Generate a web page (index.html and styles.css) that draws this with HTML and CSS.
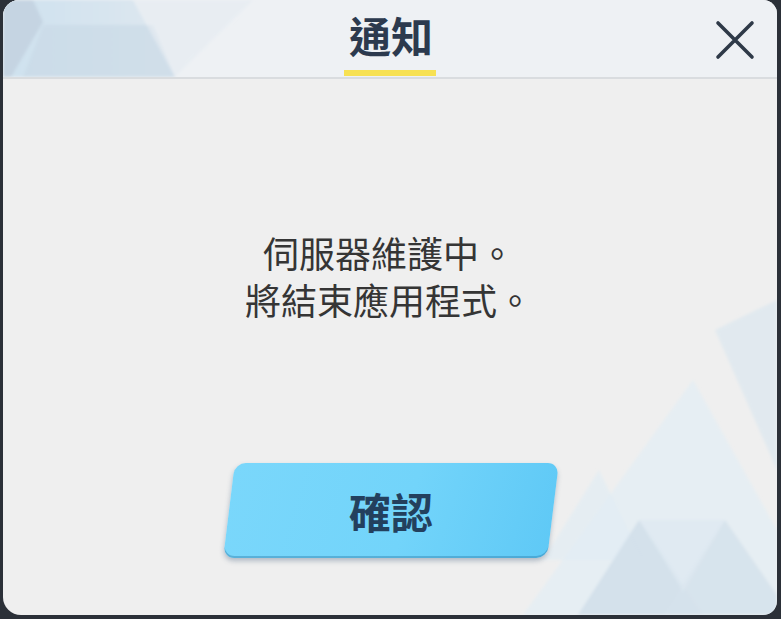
FILE: index.html
```html
<!DOCTYPE html>
<html lang="zh-Hant">
<head>
<meta charset="utf-8">
<title>通知</title>
<link rel="stylesheet" href="styles.css">
</head>
<body>
<div class="dialog">
  <svg class="bg" width="774" height="615" viewBox="0 0 774 615" aria-hidden="true">
    <defs>
      <filter id="soft" x="-5%" y="-5%" width="110%" height="110%">
        <feGaussianBlur stdDeviation="1.5"/>
      </filter>
      <linearGradient id="hfade" x1="0" y1="0" x2="1" y2="0">
        <stop offset="0" stop-color="#c9dfee"/>
        <stop offset="1" stop-color="#dbe6ef"/>
      </linearGradient>
    </defs>
    <rect x="0" y="0" width="774" height="77" fill="#eef1f4"/>
    <g filter="url(#soft)">
      <polygon points="22,0 130,0 172,77 4,77" fill="url(#hfade)" opacity="0.85"/>
      <polygon points="0,0 30,0 40,22 8,77 0,77" fill="#c5d4e2"/>
      <polygon points="40,25 150,25 172,77 20,77" fill="#c8d8e6" opacity="0.6"/>
      <polygon points="130,0 250,0 172,77" fill="#e4ebf1" opacity="0.6"/>
    </g>
    <g filter="url(#soft)">
      <polygon points="520,615 690,380 774,530 774,615" fill="#e3edf4" opacity="0.75"/>
      <polygon points="712,330 774,300 774,470" fill="#dce7f0" opacity="0.7"/>
      <polygon points="540,560 596,470 640,560" fill="#e1ecf4" opacity="0.7"/>
      <polygon points="575,615 636,520 700,615" fill="#d2dfea" opacity="0.9"/>
      <polygon points="660,615 722,520 774,595 774,615" fill="#d6e2ec" opacity="0.9"/>
      <polygon points="636,520 722,520 680,592" fill="#dde8f1" opacity="0.7"/>
    </g>
  </svg>
  <header class="head">
    <div class="spacer"></div>
    <div class="title-wrap">
      <h1 class="title">通知</h1>
      <div class="title-bar"></div>
    </div>
    <button class="close" aria-label="關閉">
      <svg width="40" height="40" viewBox="0 0 40 40">
        <path d="M3 3 L37 37 M37 3 L3 37" stroke="#2f3a48" stroke-width="3.6" stroke-linecap="round" fill="none"/>
      </svg>
    </button>
  </header>
  <main class="body">
    <p class="msg">伺服器維護中。<br>將結束應用程式。</p>
    <button class="ok"><span class="ok-label">確認</span></button>
  </main>
</div>
</body>
</html>
```

FILE: styles.css
```css
html, body {
  margin: 0;
  padding: 0;
  background: #2b3038;
  width: 781px;
  height: 619px;
  overflow: hidden;
}

.dialog {
  position: relative;
  margin-left: 3px;
  width: 774px;
  height: 615px;
  background: #efefef;
  border-radius: 16px 14px 14px 18px;
  overflow: hidden;
  font-family: "Noto Sans CJK TC", "Noto Sans", sans-serif;
}

.bg {
  position: absolute;
  left: 0;
  top: 0;
  z-index: 0;
}

.head {
  position: relative;
  z-index: 1;
  height: 77px;
  border-bottom: 2px solid #d9dcdf;
  display: grid;
  grid-template-columns: 1fr auto 1fr;
  align-items: stretch;
}

.title-wrap {
  display: flex;
  flex-direction: column;
  align-items: center;
  justify-content: flex-end;
}

.title {
  margin: 0;
  font-size: 42px;
  font-weight: 700;
  line-height: 56px;
  color: #2c3a4e;
  letter-spacing: 0;
  padding-left: 2px;
}

.title-bar {
  width: 92px;
  height: 6px;
  background: #f7e153;
  margin-bottom: 1px;
  margin-top: 7px;
}

.close {
  justify-self: end;
  align-self: center;
  margin-right: 22px;
  margin-top: 2px;
  width: 40px;
  height: 40px;
  padding: 0;
  border: 0;
  background: transparent;
  display: flex;
}

.body {
  position: relative;
  z-index: 1;
  display: flex;
  flex-direction: column;
  align-items: center;
  padding-top: 150px;
}

.msg {
  margin: 0;
  font-size: 36px;
  line-height: 47px;
  font-weight: 400;
  color: #353535;
  text-align: center;
  padding-right: 2px;
}

.ok {
  margin-top: 140px;
  width: 324px;
  height: 95px;
  margin-left: 2px;
  border: 0;
  padding: 0;
  border-radius: 11px;
  transform: skewX(-7deg);
  background: linear-gradient(100deg, #7ad7fb 0%, #72d4fa 55%, #5fc9f6 100%);
  box-shadow: inset 0 -2px 0 rgba(50, 130, 175, 0.45), 0 3px 5px rgba(60, 90, 120, 0.35);
  display: flex;
  align-items: center;
  justify-content: center;
  font-family: "Noto Sans CJK TC", "Noto Sans", sans-serif;
}

.ok-label {
  transform: skewX(7deg);
  font-size: 42px;
  font-weight: 700;
  color: #23405e;
  line-height: 50px;
}
```
